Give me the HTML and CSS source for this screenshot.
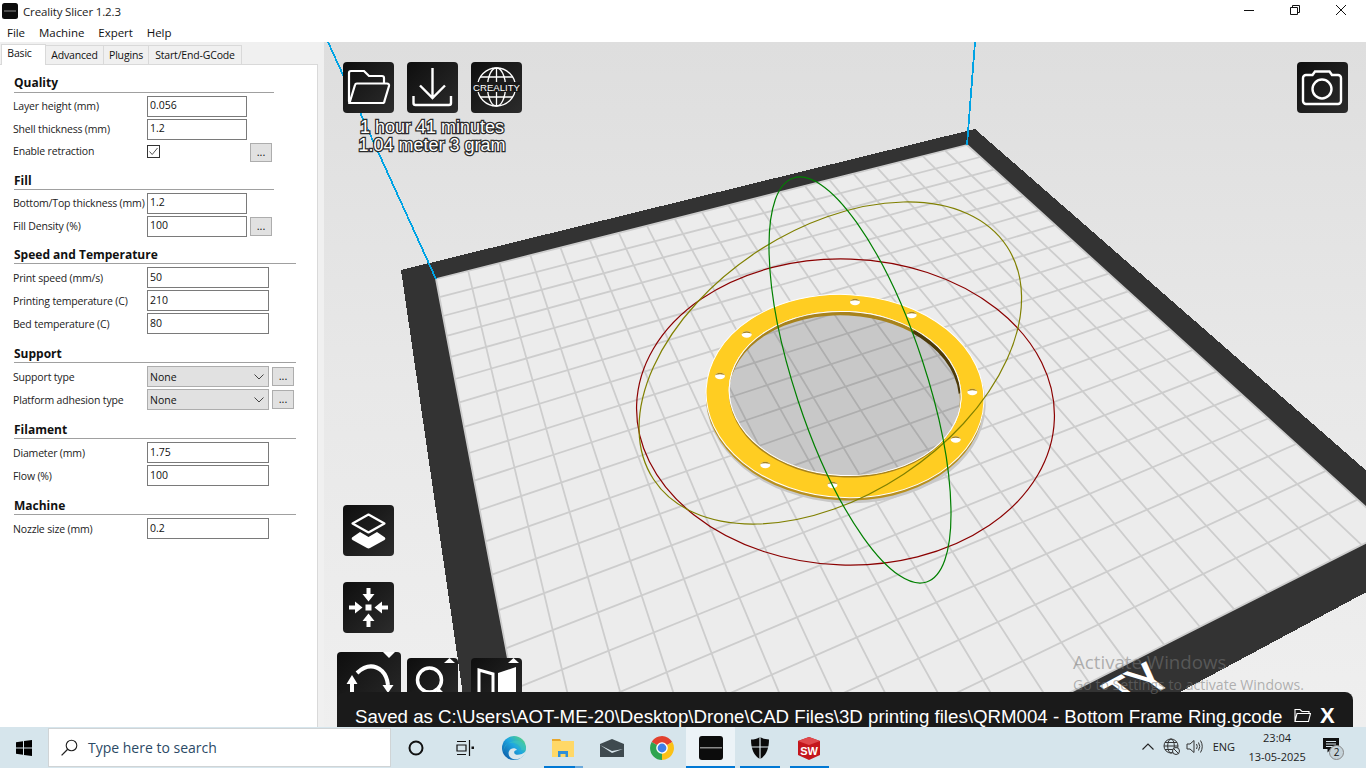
FILE: index.html
```html
<!DOCTYPE html>
<html lang="en">
<head>
<meta charset="utf-8">
<title>Creality Slicer 1.2.3</title>
<link rel="stylesheet" href="styles.css">
</head>
<body>
<div class="window">
  <header class="titlebar">
    <svg class="app-icon" viewBox="0 0 16 16"><rect width="16" height="16" rx="2.5" fill="#0c0c0c"/><rect x="2" y="7.500" width="12" height="1" fill="#8a8a8a"/></svg>
    <span class="title">Creality Slicer 1.2.3</span>
    <div class="win-buttons">
      <svg class="win-btn" viewBox="0 0 10 10"><path d="M0 5.500H10" stroke="#111" fill="none"/></svg>
      <svg class="win-btn" viewBox="0 0 10 10"><path d="M.5 2.500H7.500V9.500H.5ZM2.500 2.500V.5H9.500V7.500H7.500" stroke="#111" fill="none"/></svg>
      <svg class="win-btn" viewBox="0 0 10 10"><path d="M0 0L10 10M10 0L0 10" stroke="#111" fill="none"/></svg>
    </div>
  </header>
  <nav class="menubar"><span>File</span><span>Machine</span><span>Expert</span><span>Help</span></nav>
  <main class="main">
    <aside class="side">
      <div class="tabs">
        <span class="tab active">Basic</span><span class="tab tab-adv">Advanced</span><span class="tab tab-plug">Plugins</span><span class="tab tab-code">Start/End-GCode</span>
      </div>
      <div class="panel">
        <section class="section short">
          <h2>Quality</h2>
          <div class="row"><label>Layer height (mm)</label><div class="field">0.056</div></div>
          <div class="row"><label>Shell thickness (mm)</label><div class="field">1.2</div></div>
          <div class="row check-row"><label>Enable retraction</label>
            <div class="check-cell"><svg class="check" viewBox="0 0 13 13"><rect x=".5" y=".5" width="12" height="12" fill="#fff" stroke="#333"/><path d="M2.500 6.500L5.200 9.500L10.500 3" stroke="#555" fill="none"/></svg></div>
            <button class="more">...</button></div>
        </section>
        <section class="section short tight">
          <h2>Fill</h2>
          <div class="row"><label>Bottom/Top thickness (mm)</label><div class="field">1.2</div></div>
          <div class="row"><label>Fill Density (%)</label><div class="field">100</div><button class="more">...</button></div>
        </section>
        <section class="section">
          <h2>Speed and Temperature</h2>
          <div class="row"><label>Print speed (mm/s)</label><div class="field">50</div></div>
          <div class="row"><label>Printing temperature (C)</label><div class="field">210</div></div>
          <div class="row"><label>Bed temperature (C)</label><div class="field">80</div></div>
        </section>
        <section class="section">
          <h2>Support</h2>
          <div class="row"><label>Support type</label><div class="field select">None<svg class="chev" viewBox="0 0 10 6"><path d="M.5 .5L5 5L9.500 .5" stroke="#444" fill="none"/></svg></div><button class="more">...</button></div>
          <div class="row"><label>Platform adhesion type</label><div class="field select">None<svg class="chev" viewBox="0 0 10 6"><path d="M.5 .5L5 5L9.500 .5" stroke="#444" fill="none"/></svg></div><button class="more">...</button></div>
        </section>
        <section class="section">
          <h2>Filament</h2>
          <div class="row"><label>Diameter (mm)</label><div class="field">1.75</div></div>
          <div class="row"><label>Flow (%)</label><div class="field">100</div></div>
        </section>
        <section class="section">
          <h2>Machine</h2>
          <div class="row"><label>Nozzle size (mm)</label><div class="field">0.2</div></div>
        </section>
      </div>
    </aside>
    <div class="strip"></div>
    <div class="viewport">
      <svg class="scene" viewBox="324 42 1042 685">
        <defs>
          <linearGradient id="bg" x1="0" y1="0" x2="0" y2="1"><stop offset="0" stop-color="#dedede"/><stop offset=".5" stop-color="#e8e8e8"/><stop offset="1" stop-color="#efefef"/></linearGradient>
          <g id="hole"><ellipse rx="5" ry="3.200" fill="#fff"/><path d="M-5 0A5 3.200 0 0 1 5 0A5 1.800 0 0 0 -5 0Z" fill="#a8831c"/></g>
        </defs>
        <rect x="324" y="42" width="1042" height="685" fill="url(#bg)"/>
        <polygon class="crisp" points="401,270 975,129 1400,500 1400,574 1085,743 470,743" fill="#333"/>
        <polygon class="crisp" points="436,279 967,145 1391,530 563,949" fill="#ececec"/>
        <g id="grid" stroke="#cdcdcd" stroke-width="1.800" fill="none"></g>
        <path class="crisp" d="M328 42L436 279M975 42L967 145" stroke="#00a3e4" stroke-width="1.800" fill="none"/>
        <text class="plate-logo" transform="translate(1128,708) rotate(-28) skewX(25)">TY</text>
        <g transform="rotate(3 845 396)">
          <path fill-rule="evenodd" fill="#c8c8c8" d="M706 401a140 102 0 1 0 280 0a140 102 0 1 0 -280 0ZM729 393.500a116 82 0 1 0 232 0a116 82 0 1 0 -232 0Z"/>
          <path fill-rule="evenodd" fill="#b8901f" d="M706 399a139 101.500 0 1 0 278 0a139 101.500 0 1 0 -278 0ZM729 393.500a116 82 0 1 0 232 0a116 82 0 1 0 -232 0Z"/>
          <path fill-rule="evenodd" fill="#ffcd22" stroke="#fff" stroke-width="1" d="M706 396a139 101.500 0 1 0 278 0a139 101.500 0 1 0 -278 0ZM729 393.500a116 82 0 1 0 232 0a116 82 0 1 0 -232 0Z"/>
          <ellipse cx="845" cy="393.500" rx="116" ry="82" fill="#000" opacity=".15"/>
          <path fill-rule="evenodd" fill="#a8831c" d="M729 393.500a116 82 0 1 0 232 0a116 82 0 1 0 -232 0ZM729 396.500a115.500 81 0 1 0 231 0a115.500 81 0 1 0 -231 0Z"/>
          <path d="M911.500 326.300A116 82 0 0 1 960.600 386.400L958.500 388A116 82 0 0 0 908 329Z" fill="#4d3a08"/>
          <ellipse cx="845" cy="393.500" rx="116" ry="82" fill="none" stroke="#fff" stroke-width="1"/>
        </g>
        <use href="#hole" x="855" y="302"/><use href="#hole" x="911.700" y="315"/><use href="#hole" x="972.300" y="392"/><use href="#hole" x="955.700" y="439.500"/><use href="#hole" x="832.500" y="485"/><use href="#hole" x="765.300" y="465"/><use href="#hole" x="720" y="376"/><use href="#hole" x="746.700" y="334.500"/>
        <g fill="none" stroke-width="1.200">
          <ellipse cx="845.500" cy="412" rx="209" ry="153" transform="rotate(2 845.500 412)" stroke="#8b0000"/>
          <ellipse cx="830.300" cy="363" rx="211.600" ry="133.200" transform="rotate(-33.400 830.300 363)" stroke="#808000"/>
          <ellipse cx="860" cy="380" rx="212.700" ry="65.300" transform="rotate(71.750 860 380)" stroke="#008000"/>
        </g>
      </svg>

      <div class="tile t-open"><svg viewBox="0 0 51 51"><path d="M11 41H8a2 2 0 0 1-2-2V11a2 2 0 0 1 2-2H21L26 14H39a2 2 0 0 1 2 2V21" fill="none" stroke="#fff" stroke-width="2.200"/><path d="M6.500 41L12 23a2 2 0 0 1 2-1.500H44a2 2 0 0 1 2 2.500L41.500 39a2 2 0 0 1-2 2Z" fill="none" stroke="#fff" stroke-width="2.200"/></svg></div>
      <div class="tile t-save"><svg viewBox="0 0 51 51"><path d="M6.500 34V41a2 2 0 0 0 2 2H42a2 2 0 0 0 2-2V34M25.500 6V36M13 23.500L25.500 36L38 23.500" fill="none" stroke="#fff" stroke-width="2.400"/></svg></div>
      <div class="tile t-web"><svg viewBox="0 0 51 51"><g fill="none" stroke="#fff" stroke-width="1.300"><circle cx="25.500" cy="25" r="19"/><ellipse cx="25.500" cy="25" rx="9" ry="19"/><path d="M25.500 6V44M9 15H42M9 35H42"/></g><rect x="2" y="20" width="47" height="10" fill="#1a1a1a"/><text class="web-text" x="2" y="28.500" textLength="47" lengthAdjust="spacingAndGlyphs">CREALITY</text></svg></div>
      <div class="tile t-shot"><svg viewBox="0 0 51 51"><path d="M10 13H15.500L18 9.500H32.500L35 13H41a3 3 0 0 1 3 3V39a3 3 0 0 1-3 3H9a3 3 0 0 1-3-3V16a3 3 0 0 1 3-3Z" fill="none" stroke="#fff" stroke-width="2.400"/><circle cx="25" cy="27" r="9.500" fill="none" stroke="#fff" stroke-width="2.400"/></svg></div>
      <div class="tile t-layer"><svg viewBox="0 0 51 51"><path d="M25.500 9.500L41.500 18.500L25.500 27.500L9.500 18.500Z" fill="none" stroke="#fff" stroke-width="2.200" stroke-linejoin="round"/><path d="M17 27L25.500 32L34 27L42 32.500Q43 34 41.500 35L27 43Q25.500 43.800 24 43L9.500 35Q8 34 9 32.500Z" fill="#fff"/></svg></div>
      <div class="tile t-center"><svg viewBox="0 0 51 51"><rect x="22.500" y="22.500" width="6" height="6" fill="#fff"/><g fill="#fff"><path d="M23.500 6H27.500V12H31.500L25.500 19.500L19.500 12H23.500Z"/><path d="M23.500 45H27.500V39H31.500L25.500 31.500L19.500 39H23.500Z"/><path d="M6 23.500V27.500H12V31.500L19.500 25.500L12 19.500V23.500Z"/><path d="M45 23.500V27.500H39V31.500L31.500 25.500L39 19.500V23.500Z"/></g></svg></div>
      <div class="tile t-rotate"><svg viewBox="0 0 64 64"><path d="M20 21Q33 9 45 19Q50 24 51 33" fill="none" stroke="#fff" stroke-width="4"/><path d="M15 23L9.500 32H13V41H17V32H20.500Z" fill="#fff"/><path d="M45.500 33H56.500L51 41Z" fill="#fff"/><path d="M46 0H58L52 6Z" fill="#fff"/></svg></div>
      <div class="tile t-scale"><svg viewBox="0 0 51 51"><circle cx="22.500" cy="22" r="12" fill="none" stroke="#fff" stroke-width="3.500"/><path d="M30 31L35 36" stroke="#fff" stroke-width="4"/><path d="M37 5L42.500 0L48 5Z" fill="#fff"/></svg></div>
      <div class="tile t-mirror"><svg viewBox="0 0 51 51"><path d="M8 40V12L22 16V40" fill="none" stroke="#fff" stroke-width="3"/><path d="M27 15L45 9V40H27Z" fill="#fff"/><path d="M37 5L42.500 0L48 5Z" fill="#fff"/></svg></div>

      <div class="print-info"><span>1 hour 41 minutes</span><span>1.04 meter 3 gram</span></div>

      <div class="saved">
        <span class="saved-text">Saved as C:\Users\AOT-ME-20\Desktop\Drone\CAD Files\3D printing files\QRM004 - Bottom Frame Ring.gcode</span>
        <svg class="saved-folder" viewBox="0 0 17 15"><path d="M1 13.500V1.500H6L8 3.500H15V5.500M1 13.500L3 5.500H16.500L14.500 13.500Z" fill="none" stroke="#fff" stroke-width="1.100"/></svg>
        <span class="saved-x">X</span>
      </div>

      <div class="activate"><span class="act-1">Activate Windows</span><span class="act-2">Go to Settings to activate Windows.</span></div>
    </div>
  </main>
</div>
<footer class="taskbar">
  <div class="start"><svg viewBox="0 0 16 16"><path d="M0 2.200L7 1.200V7.500H0ZM8 1L16 0V7.500H8ZM0 8.500H7V14.800L0 13.800ZM8 8.500H16V16L8 15Z" fill="#000"/></svg></div>
  <div class="search">
    <svg class="search-icon" viewBox="0 0 17 17"><circle cx="10.500" cy="6.500" r="5.300" fill="none" stroke="#222" stroke-width="1.100"/><path d="M6.700 10.300L.6 16.400" stroke="#222" stroke-width="1.300"/></svg>
    <span>Type here to search</span>
  </div>
  <div class="task"><svg viewBox="0 0 24 24"><circle cx="12" cy="12" r="6.500" fill="none" stroke="#111" stroke-width="2"/></svg></div>
  <div class="task"><svg viewBox="0 0 24 24"><path d="M4 5.500H13M4 18.500H13M4 9H13V15H4ZM16.500 4V20" fill="none" stroke="#111" stroke-width="1.200"/><rect x="18.500" y="10.500" width="2.500" height="2.500" fill="#111"/></svg></div>
  <div class="task"><svg viewBox="0 0 24 24"><defs><linearGradient id="edge" x1="0" y1="1" x2="1" y2="0"><stop offset="0" stop-color="#0b4f9e"/><stop offset=".55" stop-color="#1ea7e1"/><stop offset="1" stop-color="#63dd6d"/></linearGradient></defs><circle cx="12" cy="12" r="12" fill="url(#edge)"/><path d="M24 15C22 23 13 25 9 22C6 20 5.500 15 9 13C11 11.500 14 12 15 14C13 14 11.500 15.500 12.500 17.500C14 20 20 19 24 15Z" fill="#d9e6ec"/><path d="M24 14C24 7 18 4 12 5C6 6 1 11 2 17C0 9 7 6 12 7C18 8 20 13 19 14Z" fill="#3cc6c0" opacity=".55"/></svg></div>
  <div class="task run run-split"><svg viewBox="0 0 24 24"><path d="M1 3H9L11 6H1Z" fill="#e8a72c"/><path d="M1 5H23V21H1Z" fill="#ffd867"/><path d="M7 15H17V21H14.500V18H9.500V21H7Z" fill="#2f8fd8"/></svg></div>
  <div class="task"><svg viewBox="0 0 24 24"><path d="M0 8L12 3L24 8V21H0Z" fill="#3f4a4f"/><path d="M0 9L12 17L23 13L12 15Z" fill="#d9e6ec"/></svg></div>
  <div class="task"><svg viewBox="0 0 24 24"><g fill="none" stroke-width="7.500"><circle cx="12" cy="12" r="8.200" stroke="#e2412e" pathLength="3" stroke-dasharray="1 2" transform="rotate(-150 12 12)"/><circle cx="12" cy="12" r="8.200" stroke="#fbc116" pathLength="3" stroke-dasharray="1 2" transform="rotate(-30 12 12)"/><circle cx="12" cy="12" r="8.200" stroke="#2fa44f" pathLength="3" stroke-dasharray="1 2" transform="rotate(90 12 12)"/></g><circle cx="12" cy="12" r="5.800" fill="#fff"/><circle cx="12" cy="12" r="4.400" fill="#3f7fe8"/></svg></div>
  <div class="task run active-task"><svg viewBox="0 0 24 24"><rect width="24" height="24" rx="3" fill="#0c0c0c"/><rect x="1" y="11" width="22" height="1.500" fill="#8a8a8a"/></svg></div>
  <div class="task run"><svg viewBox="0 0 24 24"><path d="M12 1C15 3 18 3.500 21 3.500C21 13 18 20 12 23C6 20 3 13 3 3.500C6 3.500 9 3 12 1Z" fill="#0a0a0a"/><path d="M12 1V23M3 11H21" stroke="#d9e6ec" stroke-width="1.200"/></svg></div>
  <div class="task run"><svg viewBox="0 0 24 24"><path d="M12 1L23 5V19L12 24L1 19V5Z" fill="#c4161c"/><path d="M1 5L12 9L23 5L12 1Z" fill="#e0494c"/><text class="sw" x="12" y="18.500">SW</text></svg></div>
  <div class="tray">
    <svg class="tray-chev" viewBox="0 0 12 7"><path d="M.5 6.500L6 1L11.500 6.500" fill="none" stroke="#222" stroke-width="1.100"/></svg>
    <svg class="tray-globe" viewBox="0 0 17 17"><g fill="none" stroke="#333"><circle cx="8" cy="8" r="7"/><ellipse cx="8" cy="8" rx="3.300" ry="7"/><path d="M1 8H15M2 4.500H14M2 11.500H14"/></g><circle cx="13" cy="13" r="3.500" fill="#d6e5ec" stroke="#333"/><path d="M10.500 10.500L15.500 15.500" stroke="#333"/></svg>
    <svg class="tray-vol" viewBox="0 0 17 15"><path d="M1 5H4L8 1.500V13.500L4 10H1Z" fill="none" stroke="#333"/><path d="M10.500 5Q12 7.500 10.500 10M12.500 3.500Q15 7.500 12.500 11.500M14.500 1.500Q18 7.500 14.500 13.500" fill="none" stroke="#333"/></svg>
    <span class="lang">ENG</span>
    <div class="clock"><span>23:04</span><span>13-05-2025</span></div>
    <div class="notify"><svg viewBox="0 0 16 15"><path d="M0 0H16V11H8L4.500 14.500V11H0Z" fill="#111"/><path d="M3 3.500H13M3 6H13M3 8.500H10" stroke="#d6e5ec"/></svg><span class="badge">2</span></div>
  </div>
</footer>
<script src="script.js"></script>
</body>
</html>
```
FILE: styles.css
```css
* { box-sizing: border-box; }
html, body { margin: 0; height: 100%; }
body {
  width: 1366px; height: 768px; overflow: hidden; display: flex; flex-direction: column;
  font-family: "Open Sans", "Noto Sans", sans-serif; font-size: 11px; color: #111; background: #fff;
}
.window { height: 727px; display: flex; flex-direction: column; }
.titlebar { height: 22px; display: flex; align-items: center; padding-left: 2px; background: #fff; flex: none; position: relative; }
.app-icon { width: 16px; height: 16px; }
.title { margin-left: 5px; font-size: 11.5px; color: #222; letter-spacing: -.15px; }
.win-buttons { margin-left: auto; display: flex; gap: 36px; padding-right: 20px; margin-top: -2px; }
.win-btn { width: 10px; height: 10px; }
.menubar { height: 20px; display: flex; align-items: center; gap: 14px; padding: 0 0 0 7px; background: #fff; flex: none; font-size: 11.5px; letter-spacing: -.05px; }
.main { flex: 1; display: flex; min-height: 0; }
.side { width: 318px; flex: none; display: flex; flex-direction: column; background: #f0f0f0; }
.tabs { height: 22px; display: flex; align-items: flex-end; padding-left: 1px; flex: none; font-size: 10.5px; letter-spacing: -.17px; }
.tab { height: 19px; line-height: 18px; text-align: center; background: #f0f0f0; border: 1px solid #d9d9d9; border-bottom: none; margin-left: -1px; color: #111; }
.tab.active { height: 21px; width: 45px; margin-left: 0; background: #fff; line-height: 16px; padding-right: 8px; position: relative; z-index: 1; margin-bottom: -1px; }
.tab-adv { width: 59px; }
.tab-plug { width: 46px; }
.tab-code { width: 94px; }
.panel { flex: 1; width: 318px; background: #fff; border: 1px solid #d9d9d9; border-left: none; border-bottom: none; padding: 8px 0 0 13px; }
.section { margin-bottom: 9px; width: 283px; }
.section.short { margin-bottom: 8px; width: 261px; }
.section.tight { margin-bottom: 7px; }
h2 { margin: 0 0 3px 1px; height: 20px; font-size: 12px; line-height: 21px; font-weight: 700; color: #111; border-bottom: 1px solid #a0a0a0; }
.section:first-child h2 { line-height: 19px; }
.row { display: flex; align-items: center; height: 21px; margin-bottom: 2px; }
.row:last-child { margin-bottom: 0; }
.check-row { height: 20px; }
.row label { width: 134px; flex: none; white-space: nowrap; color: #222; font-size: 10.5px; letter-spacing: -.17px; }
.short .row label { margin-bottom: 2px; }
.field { width: 122px; height: 21px; flex: none; border: 1px solid #7a7a7a; padding-left: 2px; line-height: 18px; background: #fff; color: #111; font-size: 10.5px; }
.short .field { width: 100px; line-height: 17px; }
.select { background: #e1e1e1; border-color: #adadad; display: flex; align-items: center; justify-content: space-between; padding-right: 4px; }
.chev { width: 10px; height: 6px; }
.more { width: 22px; height: 19px; margin-left: 3px; padding: 0 0 4px; flex: none; background: #e1e1e1; border: 1px solid #adadad; font: 11px "Open Sans", sans-serif; color: #111; }
.check-cell { width: 100px; display: flex; align-items: center; height: 20px; margin-top: -2px; }
.check { width: 13px; height: 13px; }
.strip { width: 6px; flex: none; background: #f0f0f0; }
.viewport { flex: 1; position: relative; overflow: hidden; }
.scene { display: block; width: 1042px; height: 685px; }
.crisp { shape-rendering: crispEdges; }
.plate-logo { font: 600 46px "Open Sans", sans-serif; fill: #fff; }
.tile { position: absolute; width: 51px; height: 51px; border-radius: 4px; background: linear-gradient(135deg, #0e0e0e, #2c2c2c); }
.tile svg { display: block; width: 100%; height: 100%; overflow: visible; }
.t-open { left: 19px; top: 20px; }
.t-save { left: 83px; top: 20px; }
.t-web { left: 147px; top: 20px; }
.t-shot { left: 973px; top: 20px; }
.t-layer { left: 19px; top: 463px; }
.t-center { left: 19px; top: 540px; }
.t-rotate { left: 13px; top: 610px; width: 64px; height: 64px; }
.t-scale { left: 83px; top: 616px; }
.t-mirror { left: 147px; top: 616px; }
.web-text { font: 400 9.5px "Liberation Sans", sans-serif; fill: #fff; }
.print-info { position: absolute; left: 36px; top: 76px; width: 144px; display: flex; flex-direction: column; align-items: center; font: 18px/18px "Liberation Sans", sans-serif; color: #fff; -webkit-text-stroke: 2.500px #2a2a2a; paint-order: stroke fill; white-space: nowrap; }
.saved { position: absolute; left: 13px; top: 650px; width: 1016px; height: 35px; border-radius: 8px 8px 0 0; background: #1a1a1a; color: #fff; white-space: nowrap; }
.saved-text { position: absolute; left: 18px; top: 16px; font: 18.700px/18px "Liberation Sans", sans-serif; }
.saved-folder { position: absolute; left: 957px; top: 16px; width: 17px; height: 15px; }
.saved-x { position: absolute; left: 983px; top: 13px; font: 700 22px/22px "Liberation Sans", sans-serif; }
.activate { position: absolute; left: 749px; top: 607px; display: flex; flex-direction: column; color: rgba(120,120,120,.55); font-family: "Open Sans", sans-serif; white-space: nowrap; pointer-events: none; }
.act-1 { font-size: 18.700px; line-height: 25px; }
.act-2 { font-size: 14.100px; line-height: 22px; }
.taskbar { height: 41px; flex: none; display: flex; background: #d6e5ec; }
.start { width: 48px; display: flex; align-items: center; justify-content: center; }
.start svg { width: 16px; height: 16px; }
.search { width: 343px; height: 39px; margin-top: 1px; display: flex; align-items: center; background: #fff; border: 1px solid #d0d4d6; padding-left: 12px; gap: 10px; font-size: 14px; color: #2b4a66; }
.search-icon { width: 17px; height: 17px; }
.task { width: 49.200px; display: flex; align-items: center; justify-content: center; position: relative; }
.task svg { width: 24px; height: 24px; }
.run::after { content: ""; position: absolute; left: 5px; right: 5px; bottom: 0; height: 2px; background: #0078d4; }
.run-split::after { background: linear-gradient(90deg, #0078d4 0 80%, #6aa9dc 80%); }
.active-task { background: #ecf3f7; }
.active-task::after { left: 0; right: 0; }
.tray { flex: 1; display: flex; align-items: center; position: relative; }
.tray-chev { width: 12px; height: 7px; margin-left: 308px; margin-top: -2px; }
.tray-globe { width: 17px; height: 17px; margin-left: 9px; margin-top: -2px; }
.tray-vol { width: 17px; height: 15px; margin-left: 6px; margin-top: -2px; }
.lang { margin-left: 10px; font-size: 11px; color: #222; margin-top: -2px; }
.clock { width: 60px; margin-left: 12px; display: flex; flex-direction: column; align-items: center; font-size: 11px; line-height: 19px; color: #222; margin-top: -1px; }
.notify { position: relative; width: 16px; height: 15px; margin-left: 16px; margin-top: -4px; }
.notify svg { display: block; width: 16px; height: 15px; }
.badge { position: absolute; left: 6px; top: 7px; width: 15px; height: 15px; border-radius: 50%; background: #c5d3da; border: 1px solid #888; font-size: 10px; line-height: 13px; text-align: center; color: #111; }
.sw { font: 700 11px "Liberation Sans", sans-serif; fill: #fff; text-anchor: middle; }
```
FILE: script.js
```js
// Perspective grid of the print bed: 20 x 20 cells projected on the plate's four corners.
(function () {
  var p = [[436, 279], [967, 145], [1391, 530], [563, 949]];
  var dx1 = p[1][0] - p[2][0], dx2 = p[3][0] - p[2][0], dx3 = p[0][0] - p[1][0] + p[2][0] - p[3][0];
  var dy1 = p[1][1] - p[2][1], dy2 = p[3][1] - p[2][1], dy3 = p[0][1] - p[1][1] + p[2][1] - p[3][1];
  var den = dx1 * dy2 - dx2 * dy1;
  var g = (dx3 * dy2 - dx2 * dy3) / den, h = (dx1 * dy3 - dx3 * dy1) / den;
  var a = p[1][0] - p[0][0] + g * p[1][0], b = p[3][0] - p[0][0] + h * p[3][0], c = p[0][0];
  var d = p[1][1] - p[0][1] + g * p[1][1], e = p[3][1] - p[0][1] + h * p[3][1], f = p[0][1];
  function map(u, v) {
    var w = g * u + h * v + 1;
    return ((a * u + b * v + c) / w).toFixed(1) + " " + ((d * u + e * v + f) / w).toFixed(1);
  }
  var n = 20, path = "";
  for (var i = 0; i <= n; i++) {
    path += "M" + map(i / n, 0) + "L" + map(i / n, 1);
    path += "M" + map(0, i / n) + "L" + map(1, i / n);
  }
  var el = document.createElementNS("http://www.w3.org/2000/svg", "path");
  el.setAttribute("d", path);
  document.getElementById("grid").appendChild(el);
})();
```
